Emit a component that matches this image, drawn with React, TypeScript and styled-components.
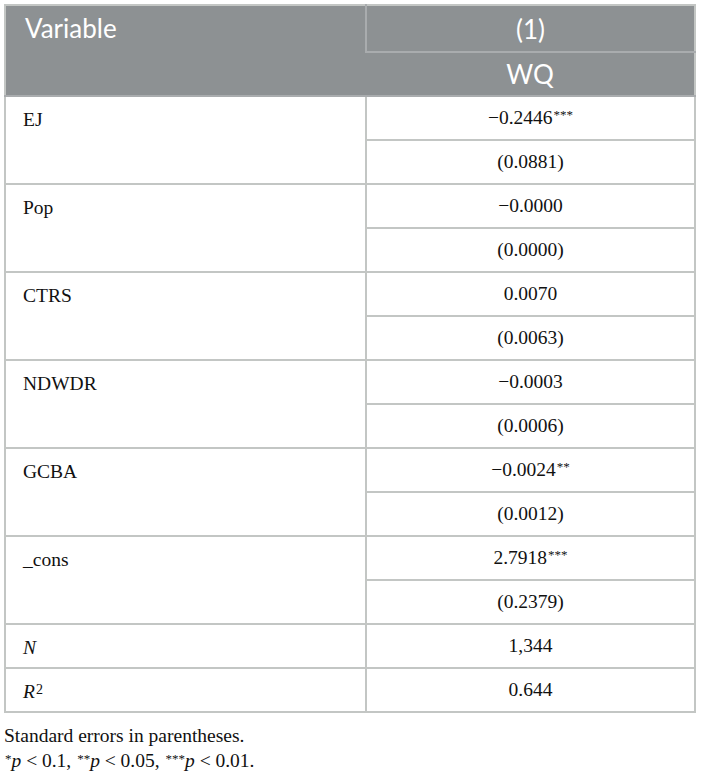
import React from "react";
import styled, { createGlobalStyle } from "styled-components";

const Global = createGlobalStyle`
  html, body { margin: 0; padding: 0; background: #ffffff; }
  body { padding: 4px 6px 0 4px; }
`;

const Wrapper = styled.div`
  width: 692px;
`;

const Table = styled.table`
  width: 100%;
  border-collapse: collapse;
  table-layout: fixed;
  border: 2px solid #c3c6c4;
  font-family: "Liberation Serif", "Times New Roman", serif;
  font-size: 19.5px;
  color: #111;
`;

const HeadRow = styled.tr`
  background: #8d9193;
`;

const HeadCell = styled.th<{ $align?: "left" | "center"; $h: number; $top?: boolean }>`
  height: ${(p) => p.$h}px;
  padding: ${(p) => (p.$top ? "7px 19px 0" : "0 18px")};
  box-sizing: border-box;
  font-family: "Lato", "Open Sans", sans-serif;
  font-weight: 400;
  font-size: 26px;
  color: #ffffff;
  text-align: ${(p) => p.$align ?? "center"};
  vertical-align: ${(p) => (p.$top ? "top" : "middle")};
  border-left: 2px solid #a9acae;
  border-bottom: 2px solid #a9acae;
  line-height: 30px;
  &:first-child { border-left: none; }
`;

const LabelCell = styled.td`
  padding: 12px 17px 0 17px;
  vertical-align: top;
  text-align: left;
  border-bottom: 2px solid #c3c6c4;
  line-height: 22px;
`;

const ValueCell = styled.td`
  height: 42px;
  padding: 0 10px;
  text-align: center;
  vertical-align: middle;
  border-left: 2px solid #c3c6c4;
  border-bottom: 2px solid #c3c6c4;
  line-height: 22px;
`;

const Stars = styled.sup`
  font-size: 13px;
  vertical-align: top;
  position: relative;
  top: -3px;
  margin-left: 1px;
`;

const Notes = styled.div`
  font-family: "Liberation Serif", "Times New Roman", serif;
  font-size: 19.5px;
  color: #111;
  padding-top: 10px;
  line-height: 25px;
`;

const Note = styled.p`
  margin: 0;
`;

const Small = styled.sup<{ $size?: number }>`
  font-size: ${(p) => p.$size ?? 13}px;
  vertical-align: top;
  position: relative;
  top: -2px;
  margin-left: 1px;
`;

type Row = { label: React.ReactNode; value: string; stars?: string; se?: string };

const rows: Row[] = [
  { label: "EJ", value: "−0.2446", stars: "***", se: "(0.0881)" },
  { label: "Pop", value: "−0.0000", se: "(0.0000)" },
  { label: "CTRS", value: "0.0070", se: "(0.0063)" },
  { label: "NDWDR", value: "−0.0003", se: "(0.0006)" },
  { label: "GCBA", value: "−0.0024", stars: "**", se: "(0.0012)" },
  { label: "_cons", value: "2.7918", stars: "***", se: "(0.2379)" },
  { label: <i>N</i>, value: "1,344" },
  {
    label: (
      <>
        <i>R</i>
        <Small $size={14}>2</Small>
      </>
    ),
    value: "0.644",
  },
];

export default function App() {
  return (
    <Wrapper>
      <Global />
      <Table>
        <colgroup>
          <col style={{ width: 361 }} />
          <col />
        </colgroup>
        <thead>
          <HeadRow>
            <HeadCell $align="left" $h={47} $top rowSpan={2}>
              Variable
            </HeadCell>
            <HeadCell $h={47}>(1)</HeadCell>
          </HeadRow>
          <HeadRow>
            <HeadCell $h={44}>WQ</HeadCell>
          </HeadRow>
        </thead>
        <tbody>
          {rows.map((r, i) =>
            r.se ? (
              <React.Fragment key={i}>
                <tr>
                  <LabelCell rowSpan={2}>{r.label}</LabelCell>
                  <ValueCell>
                    {r.value}
                    {r.stars && <Stars>{r.stars}</Stars>}
                  </ValueCell>
                </tr>
                <tr>
                  <ValueCell>{r.se}</ValueCell>
                </tr>
              </React.Fragment>
            ) : (
              <tr key={i}>
                <LabelCell>{r.label}</LabelCell>
                <ValueCell>{r.value}</ValueCell>
              </tr>
            )
          )}
        </tbody>
      </Table>
      <Notes>
        <Note>Standard errors in parentheses.</Note>
        <Note>
          <Small>*</Small>
          <i>p</i> &lt; 0.1, <Small>**</Small>
          <i>p</i> &lt; 0.05, <Small>***</Small>
          <i>p</i> &lt; 0.01.
        </Note>
      </Notes>
    </Wrapper>
  );
}
